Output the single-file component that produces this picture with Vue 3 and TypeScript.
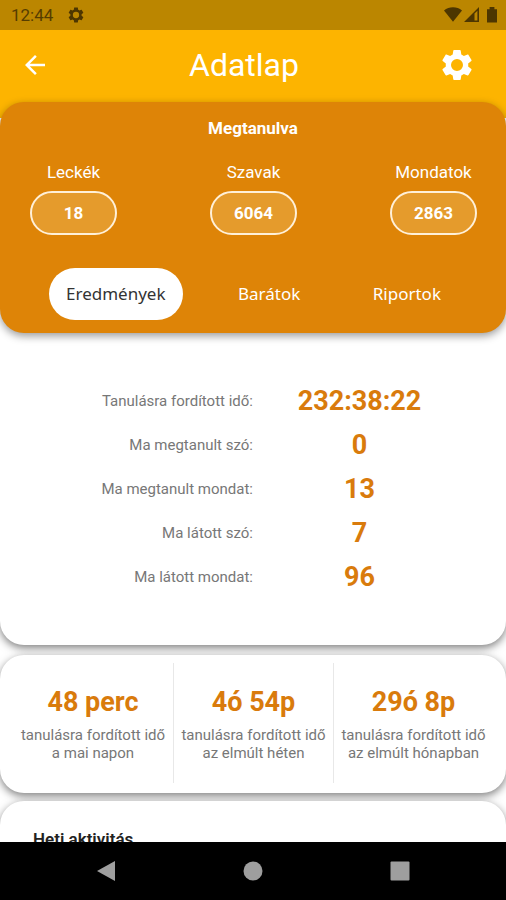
<script setup lang="ts">
interface Stat {
  label: string
  value: string
}

interface Period {
  value: string
  lines: string[]
}

const learned: Stat[] = [
  { label: 'Leckék', value: '18' },
  { label: 'Szavak', value: '6064' },
  { label: 'Mondatok', value: '2863' },
]

const tabs: string[] = ['Eredmények', 'Barátok', 'Riportok']
const activeTab = 'Eredmények'

const results: Stat[] = [
  { label: 'Tanulásra fordított idő:', value: '232:38:22' },
  { label: 'Ma megtanult szó:', value: '0' },
  { label: 'Ma megtanult mondat:', value: '13' },
  { label: 'Ma látott szó:', value: '7' },
  { label: 'Ma látott mondat:', value: '96' },
]

const periods: Period[] = [
  { value: '48 perc', lines: ['tanulásra fordított idő', 'a mai napon'] },
  { value: '4ó 54p', lines: ['tanulásra fordított idő', 'az elmúlt héten'] },
  { value: '29ó 8p', lines: ['tanulásra fordított idő', 'az elmúlt hónapban'] },
]

const gearOutline =
  'M19.43 12.98c.04-.32.07-.64.07-.98s-.03-.66-.07-.98l2.11-1.65c.19-.15.24-.42.12-.64l-2-3.46c-.12-.22-.39-.3-.61-.22l-2.49 1c-.52-.4-1.08-.73-1.69-.98l-.38-2.65C14.46 2.18 14.25 2 14 2h-4c-.25 0-.46.18-.49.42l-.38 2.65c-.61.25-1.17.59-1.69.98l-2.49-1c-.23-.09-.49 0-.61.22l-2 3.46c-.13.22-.07.49.12.64l2.11 1.65c-.04.32-.07.65-.07.98s.03.66.07.98l-2.11 1.65c-.19.15-.24.42-.12.64l2 3.46c.12.22.39.3.61.22l2.49-1c.52.4 1.08.73 1.69.98l.38 2.65c.03.24.24.42.49.42h4c.25 0 .46-.18.49-.42l.38-2.65c.61-.25 1.17-.59 1.69-.98l2.49 1c.23.09.49 0 .61-.22l2-3.46c.12-.22.07-.49-.12-.64l-2.11-1.65z'
</script>

<template>
  <div class="screen">
    <div class="status">
      <span>12:44</span>
      <svg class="status-gear" viewBox="0 0 24 24" aria-hidden="true">
        <path fill-rule="evenodd" :d="gearOutline + 'M12 7.8a4.2 4.2 0 1 0 0 8.4 4.2 4.2 0 1 0 0-8.4z'" />
      </svg>
      <svg class="signals" viewBox="0 0 54 16" aria-hidden="true">
        <path d="M0 3.6C5-.8 13-.8 18 3.6L9 14.8z" />
        <path fill-rule="evenodd" d="M20 15 35 0v15zM30.500 6.500V13.600h2.900V3.800z" />
        <path d="M43 2.200h2.600V0h4.800v2.200H53V15.500H43z" />
      </svg>
    </div>

    <header class="bar">
      <button class="icon-button" type="button" aria-label="Vissza">
        <svg class="back" viewBox="0 0 24 24" aria-hidden="true">
          <path d="M20 11H7.830l5.590-5.590L12 4l-8 8 8 8 1.410-1.410L7.830 13H20z" />
        </svg>
      </button>
      <h1>Adatlap</h1>
      <button class="icon-button" type="button" aria-label="Beállítások">
        <svg class="gear" viewBox="0 0 24 24" aria-hidden="true">
          <path fill-rule="evenodd" :d="gearOutline + 'M12 8a4 4 0 1 0 0 8 4 4 0 1 0 0-8z'" />
        </svg>
      </button>
    </header>

    <main class="content">
      <section class="panel">
        <h2>Megtanulva</h2>
        <dl class="learned">
          <div v-for="item in learned" :key="item.label">
            <dt>{{ item.label }}</dt>
            <dd>{{ item.value }}</dd>
          </div>
        </dl>
        <nav class="tabs">
          <button
            v-for="tab in tabs"
            :key="tab"
            type="button"
            class="tab"
            :class="{ active: tab === activeTab }"
          >
            {{ tab }}
          </button>
        </nav>
      </section>

      <section class="card results">
        <dl>
          <div v-for="row in results" :key="row.label" class="result">
            <dt>{{ row.label }}</dt>
            <dd>{{ row.value }}</dd>
          </div>
        </dl>
      </section>

      <section class="card periods">
        <div v-for="period in periods" :key="period.value" class="period">
          <strong>{{ period.value }}</strong>
          <p><span v-for="line in period.lines" :key="line">{{ line }}</span></p>
        </div>
      </section>

      <section class="card activity">
        <h2>Heti aktivitás</h2>
      </section>
    </main>

    <footer class="system">
      <button type="button" aria-label="Vissza a rendszerben">
        <svg viewBox="0 0 20 20" aria-hidden="true"><path d="M19 0v20L1 10z" /></svg>
      </button>
      <button type="button" aria-label="Kezdőképernyő">
        <svg viewBox="0 0 20 20" aria-hidden="true"><circle cx="10" cy="10" r="9.500" /></svg>
      </button>
      <button type="button" aria-label="Legutóbbiak">
        <svg viewBox="0 0 20 20" aria-hidden="true"><rect x="0.500" y="0.500" width="19" height="19" rx="1" /></svg>
      </button>
    </footer>
  </div>
</template>

<style>
body {
  margin: 0;
}
</style>

<style scoped>
.screen {
  display: flex;
  flex-direction: column;
  height: 100vh;
  overflow: hidden;
  background: #fff;
  font-family: Roboto, "Liberation Sans", sans-serif;
}

h1,
h2,
p,
dl,
dd {
  margin: 0;
}

button {
  padding: 0;
  border: 0;
  background: none;
  cursor: pointer;
}

svg {
  display: block;
}

.status {
  display: flex;
  flex: none;
  align-items: center;
  height: 30px;
  padding: 0 8px 0 11px;
  background: #bb8600;
  color: #563d00;
  font-size: 17px;
}

.status svg {
  fill: #4d3600;
}

.status-gear {
  width: 18px;
  height: 18px;
  margin-left: 14px;
}

.signals {
  width: 54px;
  height: 16px;
  margin-left: auto;
}

.bar {
  display: grid;
  grid-template-columns: 40px 1fr 48px;
  flex: none;
  align-items: center;
  height: 70px;
  padding: 0 25px 18px 15px;
  background: #fdb400;
}

.icon-button {
  display: grid;
  place-items: center;
  height: 40px;
}

.icon-button svg {
  fill: #fff;
}

.back {
  width: 30px;
  height: 30px;
}

.gear {
  width: 36px;
  height: 36px;
}

h1 {
  color: #fff;
  font-size: 32px;
  font-weight: 400;
  line-height: 40px;
  text-align: center;
}

.content {
  flex: 1;
  min-height: 0;
  margin-top: -16px;
}

.panel {
  position: relative;
  z-index: 1;
  padding: 14px 0 13px;
  border-radius: 24px;
  background: #de8407;
  box-shadow: 0 3px 8px rgba(0, 0, 0, 0.4);
  color: #fff;
}

.panel h2 {
  font-size: 17px;
  font-weight: 700;
  line-height: 24px;
  text-align: center;
}

.learned {
  display: flex;
  justify-content: space-between;
  padding: 20px 29px 33px 30px;
  font-size: 17px;
  text-align: center;
}

.learned dt {
  line-height: 24px;
}

.learned dd {
  box-sizing: border-box;
  width: 87px;
  margin-top: 7px;
  border: 2px solid #fff0d8;
  border-radius: 22px;
  background: #e59b2c;
  font-weight: 700;
  line-height: 40px;
}

.tabs {
  display: flex;
  justify-content: space-between;
  padding: 0 48px 0 49px;
}

.tab {
  height: 52px;
  padding: 0 17px 2px;
  border-radius: 26px;
  color: #fff;
  font-family: "Noto Sans", sans-serif;
  font-size: 17px;
}

.tab.active {
  background: #fff;
  color: #333;
}

.card {
  border-radius: 24px;
  background: #fff;
  box-shadow: 0 3px 8px rgba(0, 0, 0, 0.5);
}

/* The results card slides under the rounded bottom of the panel. */
.results {
  margin-top: -48px;
  padding: 94px 40px 46px;
}

.result {
  display: grid;
  grid-template-columns: 1fr 1fr;
  align-items: center;
  line-height: 44px;
}

.result dt {
  color: #777;
  font-size: 15px;
  text-align: right;
}

.result dd {
  color: #d97b0c;
  font-size: 27px;
  font-weight: 700;
  text-align: center;
}

.periods {
  display: grid;
  grid-template-columns: repeat(3, 1fr);
  margin-top: 10px;
  padding: 8px 13px 10px;
}

.period {
  padding: 23px 0 21px;
  text-align: center;
}

.period + .period {
  border-left: 1px solid #e8e8e8;
}

.period strong {
  display: block;
  color: #d97b0c;
  font-size: 27px;
  line-height: 32px;
}

.period p {
  margin-top: 8px;
  color: #777;
  font-size: 15px;
  line-height: 18px;
}

.period span {
  display: block;
  white-space: nowrap;
}

.activity {
  height: 300px;
  margin-top: 8px;
  padding: 26px 33px;
}

.activity h2 {
  color: #222;
  font-size: 17px;
  font-weight: 600;
  line-height: 24px;
}

.system {
  position: relative;
  z-index: 2;
  display: flex;
  flex: none;
  align-items: center;
  justify-content: space-around;
  height: 58px;
  padding: 0 32px;
  background: #000;
}

.system svg {
  width: 20px;
  height: 20px;
  fill: #9e9e9e;
}
</style>
